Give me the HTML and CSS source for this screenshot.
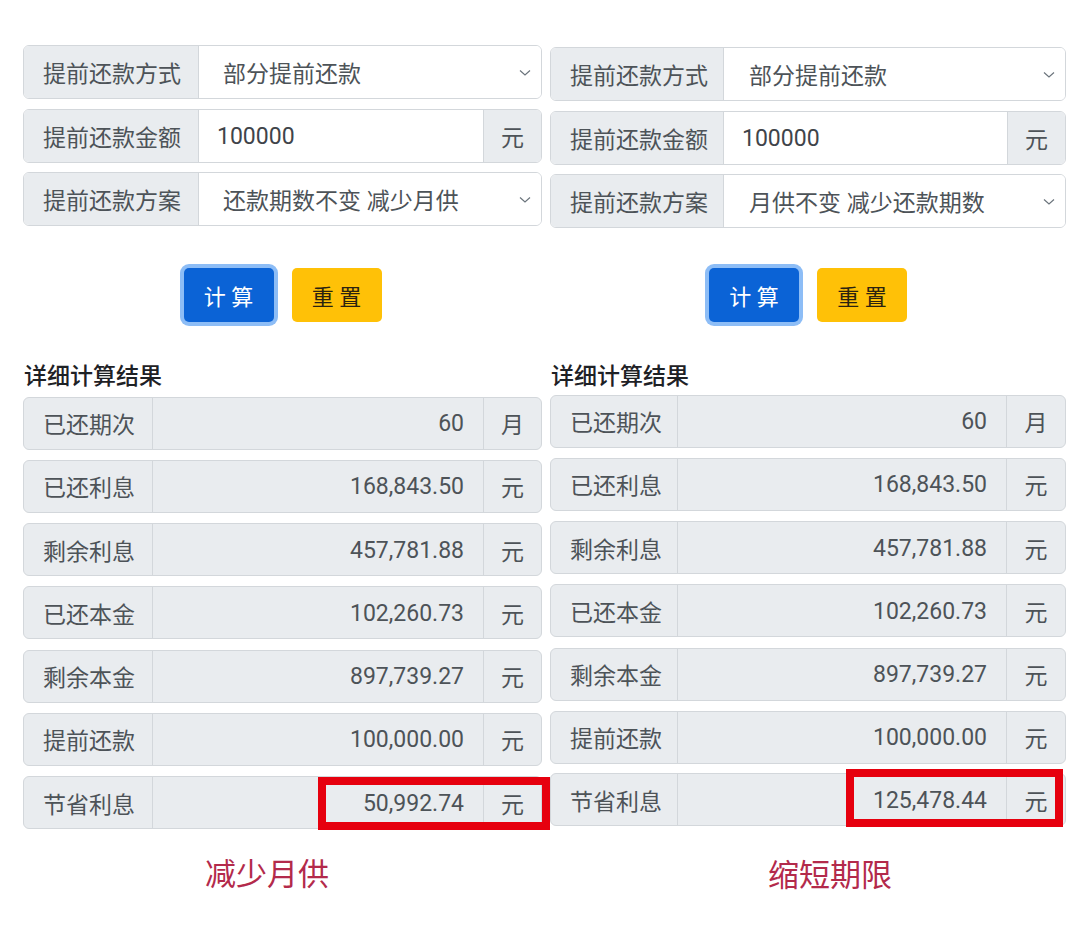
FILE: index.html
```html
<!DOCTYPE html>
<html lang="zh-CN">
<head>
    <meta charset="UTF-8">
    <meta name="viewport" content="width=device-width, initial-scale=1.0">
    <title>提前还款计算 - 对比</title>
    <link rel="stylesheet" href="styles.css">
</head>
<body>
    <div class="compare">
        <!-- 左：减少月供 -->
        <div class="panel panel-left">
            <div class="form-row">
                <span class="label-cell">提前还款方式</span>
                <div class="select-cell">部分提前还款
                    <svg class="arrow" width="12" height="8" viewBox="0 0 12 8"><path d="M1 1.5 L6 6 L11 1.5" fill="none" stroke="#6c757d" stroke-width="1.2"/></svg>
                </div>
            </div>
            <div class="form-row">
                <span class="label-cell">提前还款金额</span>
                <div class="input-cell">100000</div>
                <span class="unit-cell">元</span>
            </div>
            <div class="form-row">
                <span class="label-cell">提前还款方案</span>
                <div class="select-cell">还款期数不变 减少月供
                    <svg class="arrow" width="12" height="8" viewBox="0 0 12 8"><path d="M1 1.5 L6 6 L11 1.5" fill="none" stroke="#6c757d" stroke-width="1.2"/></svg>
                </div>
            </div>

            <div class="btn-row">
                <button class="btn btn-primary">计 算</button>
                <button class="btn btn-warning">重 置</button>
            </div>

            <h3 class="result-title">详细计算结果</h3>
            <div class="result-row"><span class="r-label">已还期次</span><span class="r-value">60</span><span class="r-unit">月</span></div>
            <div class="result-row"><span class="r-label">已还利息</span><span class="r-value">168,843.50</span><span class="r-unit">元</span></div>
            <div class="result-row"><span class="r-label">剩余利息</span><span class="r-value">457,781.88</span><span class="r-unit">元</span></div>
            <div class="result-row"><span class="r-label">已还本金</span><span class="r-value">102,260.73</span><span class="r-unit">元</span></div>
            <div class="result-row"><span class="r-label">剩余本金</span><span class="r-value">897,739.27</span><span class="r-unit">元</span></div>
            <div class="result-row"><span class="r-label">提前还款</span><span class="r-value">100,000.00</span><span class="r-unit">元</span></div>
            <div class="result-row last"><span class="r-label">节省利息</span><span class="r-value">50,992.74</span><span class="r-unit">元</span>
                <div class="mark mark-left"></div>
            </div>

            <p class="caption caption-left">减少月供</p>
        </div>

        <!-- 右：缩短期限 -->
        <div class="panel panel-right">
            <div class="form-row">
                <span class="label-cell">提前还款方式</span>
                <div class="select-cell">部分提前还款
                    <svg class="arrow" width="12" height="8" viewBox="0 0 12 8"><path d="M1 1.5 L6 6 L11 1.5" fill="none" stroke="#6c757d" stroke-width="1.2"/></svg>
                </div>
            </div>
            <div class="form-row">
                <span class="label-cell">提前还款金额</span>
                <div class="input-cell">100000</div>
                <span class="unit-cell">元</span>
            </div>
            <div class="form-row">
                <span class="label-cell">提前还款方案</span>
                <div class="select-cell">月供不变 减少还款期数
                    <svg class="arrow" width="12" height="8" viewBox="0 0 12 8"><path d="M1 1.5 L6 6 L11 1.5" fill="none" stroke="#6c757d" stroke-width="1.2"/></svg>
                </div>
            </div>

            <div class="btn-row">
                <button class="btn btn-primary">计 算</button>
                <button class="btn btn-warning">重 置</button>
            </div>

            <h3 class="result-title">详细计算结果</h3>
            <div class="result-row"><span class="r-label">已还期次</span><span class="r-value">60</span><span class="r-unit">月</span></div>
            <div class="result-row"><span class="r-label">已还利息</span><span class="r-value">168,843.50</span><span class="r-unit">元</span></div>
            <div class="result-row"><span class="r-label">剩余利息</span><span class="r-value">457,781.88</span><span class="r-unit">元</span></div>
            <div class="result-row"><span class="r-label">已还本金</span><span class="r-value">102,260.73</span><span class="r-unit">元</span></div>
            <div class="result-row"><span class="r-label">剩余本金</span><span class="r-value">897,739.27</span><span class="r-unit">元</span></div>
            <div class="result-row"><span class="r-label">提前还款</span><span class="r-value">100,000.00</span><span class="r-unit">元</span></div>
            <div class="result-row last"><span class="r-label">节省利息</span><span class="r-value">125,478.44</span><span class="r-unit">元</span>
                <div class="mark mark-right"></div>
            </div>

            <p class="caption caption-right">缩短期限</p>
        </div>
    </div>
</body>
</html>
```

FILE: styles.css
```css
* {
    margin: 0;
    padding: 0;
    box-sizing: border-box;
    font-family: 'Roboto', 'Noto Sans CJK SC', sans-serif;
}

body {
    background-color: #fff;
    width: 1080px;
    height: 926px;
    overflow: hidden;
}

.compare {
    display: flex;
    padding-left: 23px;
    gap: 8px;
}

.panel {
    display: flex;
    flex-direction: column;
}

.panel-left {
    width: 519px;
    padding-top: 45px;
}

.panel-right {
    width: 516px;
    padding-top: 47px;
}

/* form rows */
.form-row {
    display: flex;
    height: 54px;
    margin-bottom: 9.5px;
    border: 1px solid #d3d7db;
    border-radius: 6px;
    overflow: hidden;
    font-size: 23px;
    color: #4d5358;
}

.label-cell {
    display: flex;
    align-items: center;
    width: 175px;
    padding: 0 0 0 19px;
    background-color: #e9ecef;
    border-right: 1px solid #d3d7db;
    flex-shrink: 0;
}

.panel-right .label-cell {
    width: 173px;
}

.select-cell {
    flex: 1;
    display: flex;
    align-items: center;
    justify-content: space-between;
    padding: 0 10px 0 24px;
    background-color: #fff;
}

.panel-right .select-cell {
    padding-left: 25px;
}

.select-cell .arrow {
    margin-top: 2px;
}

.input-cell {
    flex: 1;
    display: flex;
    align-items: center;
    padding-left: 18px;
    padding-top: 1px;
    background-color: #fff;
    color: #3f444a;
}

.unit-cell {
    display: flex;
    align-items: center;
    justify-content: center;
    width: 58px;
    background-color: #e9ecef;
    border-left: 1px solid #d3d7db;
}

/* buttons */
.btn-row {
    display: flex;
    justify-content: center;
    gap: 18px;
    margin-top: 32px;
    margin-bottom: 41px;
}

.panel-right .btn-row {
    margin-top: 30px;
}

.btn {
    width: 90px;
    height: 54px;
    border: none;
    border-radius: 5px;
    font-size: 22px;
    cursor: pointer;
}

.btn-primary {
    background-color: #0b63d6;
    color: #fff;
    box-shadow: 0 0 0 4px #8dbdf6;
}

.btn-warning {
    background-color: #ffc107;
    color: #2b2310;
}

/* results */
.result-title {
    font-size: 23px;
    font-weight: 500;
    color: #1e2125;
    line-height: 28px;
    margin-left: 1px;
    margin-bottom: 6px;
}

.panel-right .result-title {
    margin-bottom: 4px;
}

.result-row {
    position: relative;
    display: flex;
    height: 53px;
    margin-bottom: 10.3px;
    border: 1px solid #d3d7db;
    border-radius: 6px;
    background-color: #e9ecef;
    font-size: 23px;
    color: #4d5358;
}

.r-label {
    display: flex;
    align-items: center;
    width: 129px;
    padding-left: 19px;
    border-right: 1px solid #d3d7db;
    flex-shrink: 0;
}

.panel-right .r-label {
    width: 127px;
}

.r-value {
    flex: 1;
    display: flex;
    align-items: center;
    justify-content: flex-end;
    padding-right: 19px;
    padding-top: 1px;
}

.r-unit {
    display: flex;
    align-items: center;
    justify-content: center;
    width: 58px;
    border-left: 1px solid #d3d7db;
}

.panel-right .r-unit {
    width: 59px;
}

/* red highlight boxes drawn over the last row */
.mark {
    position: absolute;
    border: 8px solid #e6000e;
}

.mark-left {
    top: 0;
    right: -9px;
    width: 232px;
    height: 53px;
}

.mark-right {
    top: -5px;
    right: 2px;
    width: 217px;
    height: 58px;
}

.panel-right .result-row.last {
    margin-top: -1px;
}

/* captions */
.caption {
    font-size: 31px;
    color: #b32a4b;
    line-height: 40px;
    margin-top: 15px;
}

.panel-right .caption {
    margin-top: 19px;
}

.caption-left {
    padding-left: 182px;
}

.caption-right {
    padding-left: 218px;
}
```
